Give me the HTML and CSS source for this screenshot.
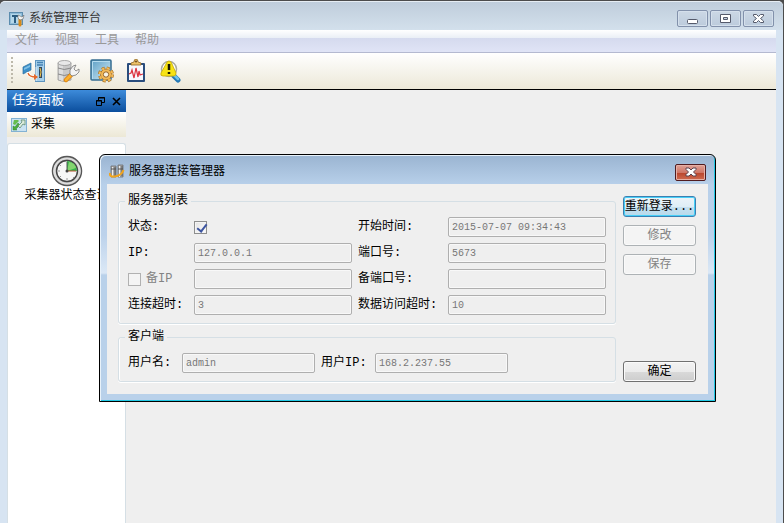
FILE: index.html
```html
<!DOCTYPE html>
<html lang="zh-CN">
<head>
  <meta charset="UTF-8">
  <title>系统管理平台</title>
  <link rel="stylesheet" href="styles.css">
</head>
<body>
  <div class="window">
    <header class="titlebar">
      <svg class="app-icon" width="16" height="16" viewBox="0 0 16 16">
        <rect x=".5" y="1.5" width="13" height="12" fill="#8fbcd9" stroke="#5b8cae"/>
        <path d="M2 3h10v9H2z" fill="#b4d7ea"/>
        <path d="M3 5h6M6 5v7" stroke="#2c5c80" stroke-width="2" fill="none"/>
        <path d="M11 14V8" stroke="#d98a18" stroke-width="3" stroke-linecap="round"/>
        <path d="M9 4v3l2 2 3-1 1-4-2 2-2-1z" fill="#f4f4f4" stroke="#777" stroke-width=".7"/>
      </svg>
      <h1>系统管理平台</h1>
      <div class="window-buttons">
        <button type="button" aria-label="最小化">
          <svg width="13" height="11" viewBox="0 0 13 11"><rect x="1.5" y="6.500" width="10" height="4" rx="1" fill="#fff" stroke="#555a6b"/></svg>
        </button>
        <button type="button" aria-label="还原">
          <svg width="13" height="11" viewBox="0 0 13 11"><path fill-rule="evenodd" d="M1.500 1.500h10v8h-10zM4.500 4.500v2h4v-2z" fill="#fff" stroke="#555a6b"/></svg>
        </button>
        <button type="button" aria-label="关闭">
          <svg width="13" height="11" viewBox="0 0 13 11"><path d="M1.500 1.500h3l2 2 2-2h3v1.500l-3 2.500 3 2.500v1.500h-3l-2-2-2 2h-3V8l3-2.500-3-2.500z" fill="#fff" stroke="#555a6b"/></svg>
        </button>
      </div>
    </header>

    <div class="client">
      <nav class="menubar">
        <a href="#">文件</a>
        <a href="#">视图</a>
        <a href="#">工具</a>
        <a href="#">帮助</a>
      </nav>

      <div class="toolbar">
        <span class="grip"></span>
        <button type="button" aria-label="连接">
          <svg width="24" height="24" viewBox="0 0 24 24">
            <path d="M1 8l8-4v7l-8 4z" fill="#3b8fc9" stroke="#2d6f9e" stroke-width=".7"/>
            <path d="M2 9l6-3v2l-6 3z" fill="#7fc0e6"/>
            <rect x="13.500" y="1.500" width="9" height="21" fill="#a6cfea" stroke="#5d94bf"/>
            <path d="M15 3.500h6M15 6h6" stroke="#4583b4" stroke-width="1.500"/>
            <rect x="17" y="8" width="3" height="11" fill="#33475b"/>
            <path d="M18 9l1 4-1 5" fill="none" stroke="#f3c54a"/>
            <path d="M14 8v14" stroke="#fff" opacity=".7"/>
            <path d="M6 13q0 5 9 5" fill="none" stroke="#fff" stroke-width="3"/>
            <path d="M6 14q1 4 8 4" fill="none" stroke="#e4672a" stroke-width="1.300"/>
            <path d="M12 15l4 3-4 3z" fill="#e4672a"/>
          </svg>
        </button>
        <button type="button" aria-label="数据库维护">
          <svg width="24" height="24" viewBox="0 0 24 24">
            <path d="M2 4v17q6 3 13 0V4z" fill="#c9c9c9" stroke="#999" stroke-width=".8"/>
            <path d="M4 5v16M6 5v17" stroke="#f4f4f4"/>
            <ellipse cx="8.500" cy="4" rx="6.500" ry="2.500" fill="#e8e8e8" stroke="#999" stroke-width=".8"/>
            <path d="M2 9q6 3 13 0M2 15q6 3 13 0" fill="none" stroke="#888"/>
            <path d="M10 21l5-5" stroke="#d87c08" stroke-width="4.500" stroke-linecap="round"/>
            <path d="M10 21l5-5" stroke="#fbb02e" stroke-width="3" stroke-linecap="round"/>
            <path d="M14 15v-4l3-4 3-1-2 4 2 2 3-2v3l-3 3-4 1z" fill="#f3f3f3" stroke="#777" stroke-width=".8"/>
          </svg>
        </button>
        <button type="button" aria-label="系统设置">
          <svg width="24" height="24" viewBox="0 0 24 24">
            <defs>
              <linearGradient id="screen" x1="0" y1="0" x2="1" y2="1"><stop offset="0" stop-color="#5c9ec5"/><stop offset="1" stop-color="#d4edf7"/></linearGradient>
            </defs>
            <rect x="1" y="1" width="20" height="20" rx="1" fill="url(#screen)" stroke="#366d91" stroke-width="1.500"/>
            <path d="M2.500 20V2.500H20" stroke="#b5dcf0" fill="none"/>
            <circle cx="16" cy="15.500" r="6.500" fill="none" stroke="#a9752c" stroke-width="3" stroke-dasharray="3 2.105"/>
            <circle cx="16" cy="15.500" r="5.500" fill="#f3ba58" stroke="#ad752a"/>
            <circle cx="16" cy="15.500" r="6.300" fill="none" stroke="#f3ba58" stroke-width="2" stroke-dasharray="2.500 2.448"/>
            <circle cx="16" cy="15.500" r="2.700" fill="#f8f3e6" stroke="#97652a"/>
          </svg>
        </button>
        <button type="button" aria-label="运行状况">
          <svg width="24" height="24" viewBox="0 0 24 24">
            <rect x="3" y="4" width="18" height="19" rx="1" fill="#294d7d"/>
            <rect x="5" y="6" width="14" height="15" fill="#f7f9ff"/>
            <path d="M7 6V4l3-1q0-3 2-3t2 3l3 1v2z" fill="#edc36b" stroke="#8d6322" stroke-width=".8"/>
            <circle cx="12" cy="2.500" r="1" fill="#6b4b20"/>
            <path d="M5 15l2-1 1-3 2 8 2-10 2 9 1-6 1 4 3-1" fill="none" stroke="#db3340" stroke-width="1.200"/>
          </svg>
        </button>
        <button type="button" aria-label="告警查询">
          <svg width="24" height="24" viewBox="0 0 24 24">
            <path d="M15 16l5 5" stroke="#2378b5" stroke-width="5" stroke-linecap="round"/>
            <path d="M16 16l4 4" stroke="#6cc3ef" stroke-width="2.500" stroke-linecap="round"/>
            <circle cx="11" cy="10" r="7.500" fill="#fff" stroke="#a9a99d" stroke-width="1.500"/>
            <path d="M11 2q2 0 3 3l4 9q0 3-2 3H5q-3 0-2-3l5-9q1-3 3-3z" fill="#f7e315" stroke="#c7a900" stroke-width=".8"/>
            <path d="M11 5v6M11 13v2" stroke="#161600" stroke-width="2.500"/>
          </svg>
        </button>
      </div>

      <div class="workspace">
        <aside class="task-panel">
          <div class="panel-title">
            <h2>任务面板</h2>
            <button type="button" aria-label="浮动">
              <svg width="9" height="9" viewBox="0 0 9 9"><path d="M2.500 3V.5h6v5H6M2 1h7M.5 3.500h5v5h-5zM0 4h6" fill="none" stroke="#000"/></svg>
            </button>
            <button type="button" aria-label="关闭面板">
              <svg width="9" height="9" viewBox="0 0 9 9"><path d="M1 1l7 7M8 1L1 8" stroke="#000" stroke-width="1.600"/></svg>
            </button>
          </div>
          <button type="button" class="panel-group">
            <svg width="16" height="14" viewBox="0 0 16 14">
              <rect x=".5" y=".5" width="15" height="13" fill="#c9e2f2" stroke="#83b2d3"/>
              <path d="M2 12V8l2 1 3-4 2 2-4 4 1 1z" fill="#4cad3c" stroke="#2d8430" stroke-width=".5"/>
              <path d="M14 2v5l-2-1-3 4-2-2 4-4-1-2z" fill="#dcebdc" stroke="#528464" stroke-width=".7"/>
              <path d="M3 2h4l1 1-4 4-2-1z" fill="#67bd50"/>
            </svg>
            采集
          </button>
          <div class="panel-body">
            <a class="task" href="#">
              <svg width="32" height="32" viewBox="0 0 32 32">
                <defs>
                  <linearGradient id="ring" x1="0" y1="0" x2="0" y2="1"><stop offset="0" stop-color="#888"/><stop offset=".5" stop-color="#f4f4f4"/><stop offset="1" stop-color="#999"/></linearGradient>
                </defs>
                <circle cx="16" cy="16" r="14.500" fill="url(#ring)" stroke="#575757" stroke-width="1.500"/>
                <circle cx="16" cy="16" r="12.500" fill="none" stroke="#ddd" stroke-width="2"/>
                <circle cx="16" cy="16" r="10.500" fill="#f7f7f7" stroke="#444" stroke-width="1.500"/>
                <path d="M16 16V6a10 10 0 0 1 10 10z" fill="#36b44a"/>
                <path d="M16 16l2-9q6 1 7 6z" fill="#83d56f"/>
                <path d="M16 7v9" stroke="#555"/>
                <path d="M15 16h10" stroke="#b85535"/>
                <circle cx="16" cy="16" r="1.500" fill="#444"/>
                <path d="M7 16h2M16 23v2M9 10l1 1M9 22l1-1M22 22l1 1" stroke="#999"/>
              </svg>
              <span>采集器状态查询</span>
            </a>
          </div>
        </aside>
        <main class="desktop"></main>
      </div>
    </div>
  </div>

  <div class="dialog" role="dialog" aria-labelledby="dialog-title">
    <header class="dialog-title">
      <svg width="16" height="16" viewBox="0 0 16 16">
        <path d="M2 2h5v11H2zM9 1h5v12H9z" fill="#aaa" stroke="#666" stroke-width=".7"/>
        <path d="M3.500 3v10M10.500 2v11" stroke="#eee"/>
        <path d="M6 3v9M13 2v10M2 5h5M9 5h5" stroke="#555"/>
        <path d="M1 9q-1 4 5 3.500Q13 11 14.500 6" fill="none" stroke="#f2a51d" stroke-width="2"/>
      </svg>
      <h2 id="dialog-title">服务器连接管理器</h2>
      <button type="button" class="close" aria-label="关闭对话框">
        <svg width="12" height="10" viewBox="0 0 12 10"><path d="M1 1h3l2 2 2-2h3v1.500L8.500 5 11 7.500V9H8L6 7 4 9H1V7.500L3.500 5 1 2.500z" fill="#fff" stroke="#5b4450"/></svg>
      </button>
    </header>

    <form class="dialog-body">
      <div class="groups">
        <fieldset>
          <legend>服务器列表</legend>
          <div class="server-fields">
            <label for="status">状态:</label>
            <input type="checkbox" id="status" checked>
            <label for="start">开始时间:</label>
            <input type="text" id="start" value="2015-07-07 09:34:43" disabled>
            <label for="ip">IP:</label>
            <input type="text" id="ip" value="127.0.0.1" disabled>
            <label for="port">端口号:</label>
            <input type="text" id="port" value="5673" disabled>
            <label class="check-label"><input type="checkbox" disabled>备IP</label>
            <input type="text" aria-label="备IP" disabled>
            <label for="port2">备端口号:</label>
            <input type="text" id="port2" disabled>
            <label for="timeout">连接超时:</label>
            <input type="text" id="timeout" value="3" disabled>
            <label for="data-timeout">数据访问超时:</label>
            <input type="text" id="data-timeout" value="10" disabled>
          </div>
        </fieldset>
        <fieldset>
          <legend>客户端</legend>
          <div class="client-fields">
            <label for="user">用户名:</label>
            <input type="text" id="user" value="admin" disabled>
            <label for="user-ip">用户IP:</label>
            <input type="text" id="user-ip" value="168.2.237.55" disabled>
          </div>
        </fieldset>
      </div>
      <div class="actions">
        <button type="button" class="btn active">重新登录...</button>
        <button type="button" class="btn" disabled>修改</button>
        <button type="button" class="btn" disabled>保存</button>
        <button type="button" class="btn ok">确定</button>
      </div>
    </form>
  </div>
</body>
</html>
```
FILE: styles.css
```css
* {
  box-sizing: border-box;
}
body {
  margin: 0;
  background: #4c4c4c;
  font-family: "Liberation Mono", "Noto Sans CJK SC", monospace;
  font-size: 12px;
  line-height: 14px;
  color: #000;
  overflow: hidden;
}
h1, h2 {
  margin: 0;
  font-size: 12px;
  font-weight: normal;
}
a {
  color: inherit;
  text-decoration: none;
}
button {
  font: inherit;
  color: inherit;
  padding: 0;
}
svg {
  display: block;
  flex: none;
}

/* main window */
.window {
  display: flex;
  flex-direction: column;
  height: 100vh;
  padding: 0 7px;
  background: #d7e4f2;
  border-top: 1px solid #4c4c4c;
  border-right: 1px solid #4c4c4c;
  border-radius: 6px 6px 0 0;
}
.titlebar {
  display: flex;
  align-items: center;
  height: 29px;
  margin: 0 -7px;
  padding: 5px 9px 0 9px;
  background: linear-gradient(#bfcddb, #d3e0ec);
  border-top: 1px solid #e6edf3;
  border-radius: 5px 5px 0 0;
}
.titlebar h1 {
  margin-left: 4px;
  color: #333;
}
.window-buttons {
  display: flex;
  gap: 2px;
  margin-left: auto;
}
.window-buttons button {
  display: flex;
  align-items: center;
  justify-content: center;
  width: 31px;
  height: 17px;
  background: linear-gradient(#ccd8e5, #bccbdc);
  border: 1px solid #8291ab;
  border-radius: 2px;
  box-shadow: inset 0 0 0 1px #d5e0ec;
}
.client {
  flex: 1;
  display: flex;
  flex-direction: column;
}
.menubar {
  display: flex;
  gap: 16px;
  height: 23px;
  padding: 4px 8px;
  color: #999;
  background: linear-gradient(#fff, #eaeff6 8px, #d5daee 8px, #e0e4f6);
  border-bottom: 1px solid #b4b9d0;
}
.toolbar {
  display: flex;
  align-items: center;
  gap: 10px;
  height: 37px;
  padding-left: 4px;
  background: linear-gradient(#fff, #ece8d8);
  border-bottom: 1px solid #000;
}
.grip {
  width: 2px;
  height: 28px;
  margin-right: -1px;
  background: repeating-linear-gradient(#bdb9ab 0 2px, transparent 2px 4px);
}
.toolbar button, .panel-title button {
  border: none;
  background: none;
}
.workspace {
  flex: 1;
  display: flex;
}
.desktop {
  flex: 1;
  background: #efefef;
}

/* left panel */
.task-panel {
  display: flex;
  flex-direction: column;
  width: 119px;
  background: #efefef;
}
.panel-title {
  display: flex;
  align-items: center;
  gap: 7px;
  height: 22px;
  padding: 0 5px;
  background: linear-gradient(#3d8bda, #0b4e9d);
}
.panel-title h2 {
  flex: 1;
  font-size: 13px;
  color: #fff;
}
.panel-group {
  display: flex;
  align-items: center;
  gap: 4px;
  height: 25px;
  padding: 0 4px;
  border: none;
  background: linear-gradient(#fff, #ece8d6);
}
.panel-body {
  flex: 1;
  margin-top: 6px;
  padding-top: 11px;
  background: #fff;
  border: 1px solid #d5dfe5;
  border-bottom: none;
  border-radius: 3px 3px 0 0;
}
.task {
  display: flex;
  flex-direction: column;
  align-items: center;
  gap: 2px;
}

/* server connection dialog */
.dialog {
  position: absolute;
  left: 99px;
  top: 154px;
  width: 617px;
  padding: 0 6px 6px;
  background: linear-gradient(#9ab4d1, #b8d0ea 30px, #bcd2eb 80px, #dbe8f6 118px, #b9d1ea 120px);
  border: 1px solid #000;
  border-radius: 6px 6px 0 0;
  box-shadow: inset 1px 1px 0 #e8f2fa, inset -1px -1px 0 #22c9e5;
}
.dialog-title {
  display: flex;
  align-items: center;
  height: 29px;
  padding: 5px 3px 0 3px;
}
.dialog-title h2 {
  flex: 1;
  margin-left: 4px;
}
.close {
  display: flex;
  align-items: center;
  justify-content: center;
  width: 31px;
  height: 17px;
  background: linear-gradient(#dfa298, #cf7666 50%, #b8432b 50%, #cf6b50);
  border: 1px solid #501c20;
  border-radius: 2px;
  box-shadow: inset 0 0 0 1px #e6b0a6;
}
.dialog-body {
  display: flex;
  gap: 7px;
  margin: 0 1px 1px;
  padding: 10px 12px 12px 11px;
  background: #efefef;
}
.groups {
  flex: 1;
  display: flex;
  flex-direction: column;
  gap: 6px;
}
fieldset {
  margin: 0;
  min-width: 0;
  padding: 9px 9px 8px;
  border: 1px solid #d5dfe5;
  border-radius: 3px;
  box-shadow: inset 1px 0 0 #fff, 0 1px 0 #fff;
}
legend {
  padding: 0 3px;
  margin-left: -3px;
}
.server-fields, .client-fields {
  display: grid;
  grid-template-columns: 60px 1fr 84px 1fr;
  gap: 6px;
  align-items: center;
}
.client-fields {
  grid-template-columns: 48px 133px 48px 133px;
}
label {
  white-space: nowrap;
}
input[type="text"] {
  width: 100%;
  height: 20px;
  padding: 0 3px;
  font: 10px/14px "Liberation Mono", "Noto Sans CJK SC", monospace;
  color: #777;
  background: #efefef;
  border: 1px solid #afafaf;
  border-radius: 2px;
  box-shadow: inset 0 0 0 1px #f8f8f8;
}
input[type="checkbox"] {
  appearance: none;
  width: 13px;
  height: 13px;
  margin: 0;
  background: linear-gradient(135deg, #e2e2e2, #fff);
  border: 1px solid #8e8f8f;
  box-shadow: inset 0 0 0 1px #f4f4f4;
}
input[type="checkbox"]:checked::before {
  content: "";
  display: block;
  width: 4px;
  height: 8px;
  margin: 0 0 0 4px;
  border: solid #3d55a0;
  border-width: 0 2px 2px 0;
  transform: rotate(38deg);
}
input[type="checkbox"]:disabled {
  border-color: #b1b1b1;
  background: #f4f4f4;
}
.check-label {
  display: flex;
  align-items: center;
  gap: 5px;
  color: #838383;
}
.actions {
  display: flex;
  flex-direction: column;
  gap: 8px;
  width: 73px;
  padding-top: 2px;
}
.btn {
  height: 21px;
  white-space: nowrap;
  background: linear-gradient(#f2f2f2, #ebebeb 50%, #dadada 50%, #cdcdcd);
  border: 1px solid #707070;
  border-radius: 3px;
  box-shadow: inset 0 0 0 1px #fafafa;
}
.btn:disabled {
  color: #838383;
  background: #f4f4f4;
  border-color: #adb2b5;
}
.btn.active {
  background: linear-gradient(#ecf4f9, #dfeef6 50%, #c6e1f0 50%, #b7d9eb);
  border-color: #3c7fb1;
  box-shadow: inset 0 0 0 1px #46d0f8;
}
.btn.ok {
  margin-top: auto;
}
```
